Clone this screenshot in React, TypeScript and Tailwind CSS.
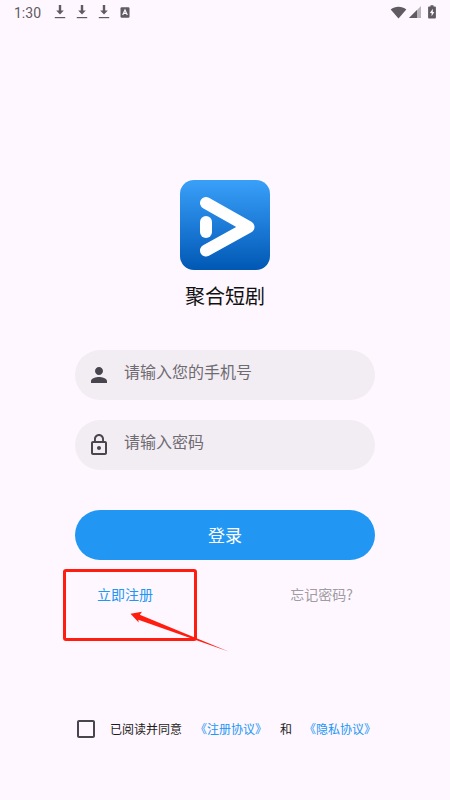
import { ReactNode } from "react";
import { MdCheckBoxOutlineBlank, MdLockOutline, MdPerson } from "react-icons/md";

const DownloadIcon = () => (
    <svg className="mb-[2px]" width="12" height="15" viewBox="0 0 12 15" fill="#5f5b61">
        <path d="M4.8 0h2.4v5.4h2.6L6 9.6 2.2 5.4h2.6z" />
        <path d="M.8 12h10.4v1.2H.8z" />
    </svg>
);

const StatusBar = () => (
    <div className="flex h-[26px] items-center pl-[14px] pr-[14px] font-['Roboto',sans-serif] text-[14px] text-[#5f5b61]">
        <span className="w-[40px]">1:30</span>
        <div className="flex items-center gap-[10px]">
            <DownloadIcon />
            <DownloadIcon />
            <DownloadIcon />
            <svg className="mb-[2px]" width="10" height="11" viewBox="0 0 10 11">
                <rect x=".5" y=".2" width="9" height="10.6" rx="1.2" fill="#5f5b61" />
                <path d="M2.7 8 5 2.9 7.3 8M3.5 6.4h3" fill="none" stroke="#fef7ff" strokeWidth="1.2" />
            </svg>
        </div>
        <div className="mb-[2px] ml-auto flex items-center">
            <svg width="17" height="13" viewBox="0 0 17 13" fill="#5f5b61">
                <path d="M.7 3.4C5-.3 12-.3 16.3 3.4L8.5 12.6z" />
            </svg>
            <svg className="ml-[2px]" width="12" height="12" viewBox="0 0 12 12">
                <path d="M12 0v12H0z" fill="#b9b4bb" />
                <path d="M8 4v8H0z" fill="#5f5b61" />
            </svg>
            <svg className="ml-[7px]" width="8" height="14" viewBox="0 0 8 14">
                <path d="M2.5.3h3v1.2H7q.9 0 .9.9v10.1q0 .9-.9.9H1q-.9 0-.9-.9V2.4q0-.9.9-.9h1.5z" fill="#5f5b61" />
                <path d="M4.8 3.7 1.9 8h1.7v3.2L6.3 7H4.8z" fill="#fef7ff" />
            </svg>
        </div>
    </div>
);

const Logo = () => (
    <svg width="90" height="90" viewBox="0 0 90 90">
        <defs>
            <linearGradient id="logo-bg" x1="0" y1="0" x2="0" y2="1">
                <stop offset="0" stopColor="#39a0f8" />
                <stop offset=".5" stopColor="#1d7cd8" />
                <stop offset="1" stopColor="#0058b4" />
            </linearGradient>
        </defs>
        <rect width="90" height="90" rx="14" fill="url(#logo-bg)" />
        <path
            d="M26 23 68.5 47 26 70.5"
            fill="none"
            stroke="#fff"
            strokeWidth="12"
            strokeLinecap="round"
            strokeLinejoin="round"
        />
        <rect x="20" y="36" width="12" height="22" rx="6" fill="#fff" />
    </svg>
);

interface FieldProps {
    icon: ReactNode;
    placeholder: string;
}

const Field = ({ icon, placeholder }: FieldProps) => (
    <label className="flex h-[50px] items-center rounded-full bg-[#f2edf3] pl-3 text-[#49454f]">
        {icon}
        <span className="mb-[8px] ml-[13px] text-[16px] leading-6 text-[#6f6b72]">{placeholder}</span>
    </label>
);

export default function App() {
    return (
        <div className="relative h-[800px] w-[450px] overflow-hidden bg-[#fef7ff] font-['Noto_Sans_CJK_SC',sans-serif]">
            <StatusBar />

            <div className="mt-[154px] flex flex-col items-center">
                <Logo />
                <h1 className="mt-[11px] text-[20px] leading-[30px] text-[#111]">聚合短剧</h1>
            </div>

            <div className="mx-[75px] mt-[38.5px] flex flex-col gap-5">
                <Field icon={<MdPerson size={24} />} placeholder="请输入您的手机号" />
                <Field icon={<MdLockOutline size={24} />} placeholder="请输入密码" />
            </div>

            <button className="mx-[75px] mt-10 flex h-[50px] w-[300px] items-center justify-center rounded-full bg-[#2196f3] text-[17px] text-white">
                登录
            </button>

            <div className="mt-[24.5px] flex justify-between pl-[97px] pr-[97px] text-[14px] leading-5">
                <a className="text-[#2196f3]">立即注册</a>
                <a className="text-[#a09ca1]">忘记密码?</a>
            </div>

            <div className="mt-[113px] flex items-center pl-[73.5px] text-[12px] leading-6 text-[#1d1b20]">
                <MdCheckBoxOutlineBlank size={24} className="text-[#49454f]" />
                <span className="ml-[12.5px]">已阅读并同意</span>
                <a className="ml-[13px] text-[#2196f3]">《注册协议》</a>
                <span className="ml-[13px]">和</span>
                <a className="ml-[12px] text-[#2196f3]">《隐私协议》</a>
            </div>

            {/* highlight around the register link */}
            <div className="absolute left-[63px] top-[569px] h-[72px] w-[134px] rounded-[3px] border-[3px] border-[#ff1d0f]" />
            <svg className="absolute left-[125px] top-[605px]" width="110" height="50" viewBox="0 0 110 50">
                <path d="M5.5 8.7 17 6.7 14.8 9.8 103.5 46.5 13.3 14.8 13.7 17.6z" fill="#ff1d0f" />
            </svg>
        </div>
    );
}
